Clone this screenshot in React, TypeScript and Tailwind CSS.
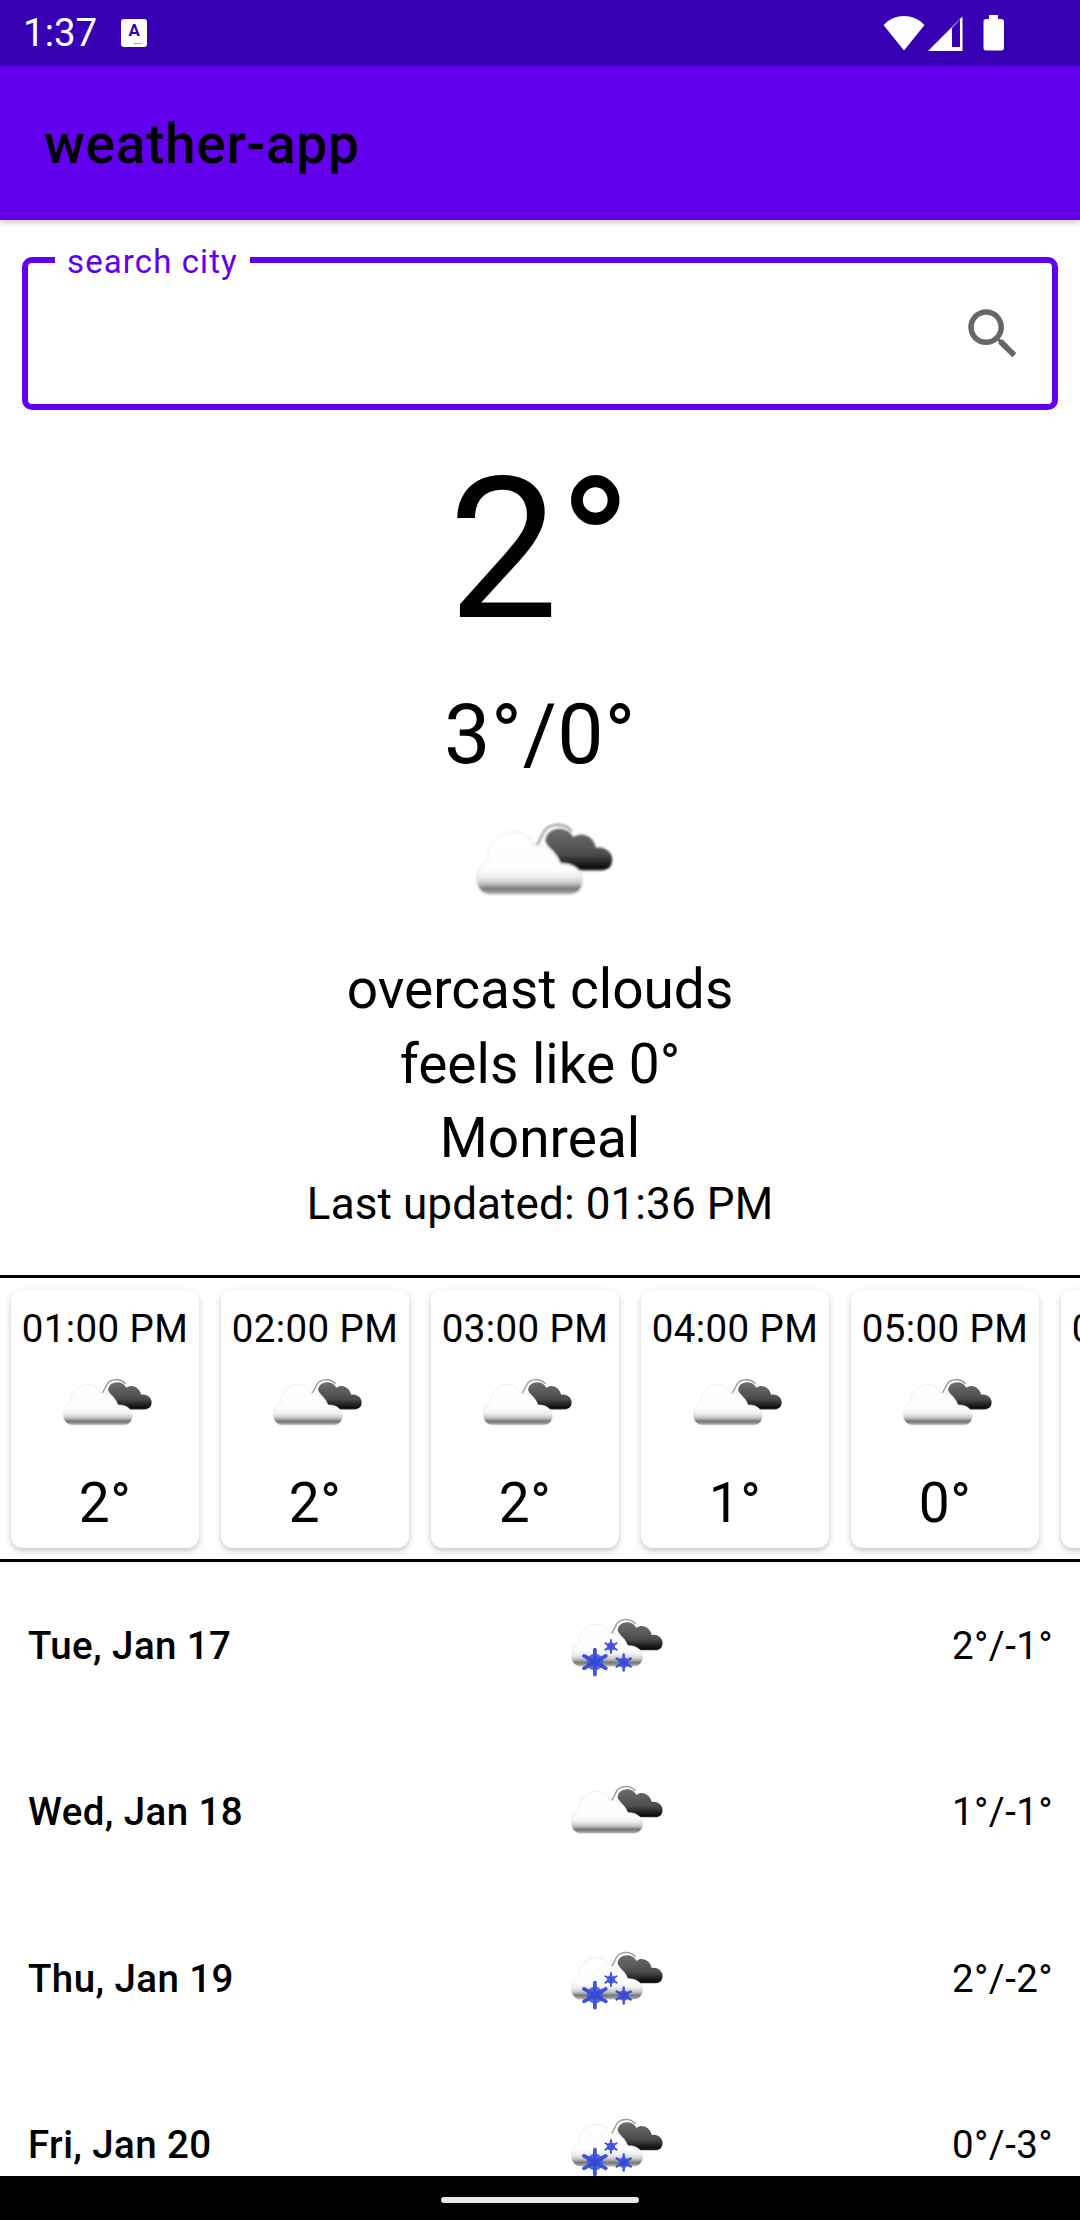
import React from 'react';

const hours = [
    { time: '01:00 PM', temp: '2°' },
    { time: '02:00 PM', temp: '2°' },
    { time: '03:00 PM', temp: '2°' },
    { time: '04:00 PM', temp: '1°' },
    { time: '05:00 PM', temp: '0°' },
    { time: '06:00 PM', temp: '0°' }
];

const days = [
    { date: 'Tue, Jan 17', snow: true, temp: '2°/-1°' },
    { date: 'Wed, Jan 18', snow: false, temp: '1°/-1°' },
    { date: 'Thu, Jan 19', snow: true, temp: '2°/-2°' },
    { date: 'Fri, Jan 20', snow: true, temp: '0°/-3°' }
];

const Flake = ({ x, y, r }: { x: number; y: number; r: number }) => (
    <g transform={`translate(${x} ${y})`} stroke="#3045d8" strokeWidth={r * 0.3} strokeLinecap="round" opacity={0.92}>
        <circle r={r * 0.66} fill="#4a5de2" stroke="none" />
        <line x1={0} y1={-r} x2={0} y2={r} />
        <line x1={-r * 0.87} y1={-r * 0.5} x2={r * 0.87} y2={r * 0.5} />
        <line x1={-r * 0.87} y1={r * 0.5} x2={r * 0.87} y2={-r * 0.5} />
    </g>
);

const WeatherIcon = ({ snow, className }: { snow?: boolean; className: string }) => (
    <svg viewBox="100 90 430 280" className={className}>
        <defs>
            <linearGradient id="whiteCloud" x1="0" y1="0" x2="0" y2="1">
                <stop offset="0" stopColor="#ffffff" />
                <stop offset="0.6" stopColor="#fdfdfd" />
                <stop offset="0.72" stopColor="#eeeeee" />
                <stop offset="0.82" stopColor="#c8c8c8" />
                <stop offset="0.91" stopColor="#777777" />
                <stop offset="1" stopColor="#b0b0b0" />
            </linearGradient>
            <linearGradient id="darkCloud" x1="0" y1="0" x2="0" y2="1">
                <stop offset="0" stopColor="#6e6e6e" />
                <stop offset="0.6" stopColor="#4c4c4c" />
                <stop offset="0.93" stopColor="#0c0c0c" />
                <stop offset="1" stopColor="#333333" />
            </linearGradient>
            <filter id="soft" x="-10%" y="-10%" width="120%" height="120%">
                <feGaussianBlur stdDeviation="3.5" />
            </filter>
        </defs>
        <g filter="url(#soft)">
            <path
                d="M318 160 C318 118 382 108 402 148 C428 128 464 146 470 180 C496 174 526 196 518 224 C514 244 496 250 470 248 L420 248 C392 248 372 238 362 222 C350 190 325 180 318 160 Z"
                fill="url(#darkCloud)"
            />
            <path
                d="M286 178 C298 168 304 146 314 130 C328 108 372 100 398 130"
                fill="none"
                stroke="#a0a0a0"
                strokeWidth="7"
            />
            <path
                d="M150 320 C122 318 106 292 112 262 C116 238 130 222 146 214 C140 168 186 130 226 132 C252 133 272 148 282 172 C318 172 348 190 362 228 C398 224 432 246 430 282 C428 306 412 320 392 320 Z"
                fill="url(#whiteCloud)"
                stroke="#e4e4e4"
                strokeWidth="3"
            />
            {snow && (
                <>
                    <Flake x={216} y={301} r={56} />
                    <Flake x={288} y={231} r={29} />
                    <Flake x={345} y={303} r={36} />
                </>
            )}
        </g>
    </svg>
);

const StatusBar = () => (
    <div className="h-[66px] shrink-0 bg-[#3700B3] flex items-center text-white">
        <span className="ml-[23px] text-[38.5px] leading-none">1:37</span>
        <div className="ml-[24px] w-[26px] h-[28px] bg-white rounded-[3px] flex flex-col items-center text-[#3700B3]">
            <span className="text-[17px] font-bold leading-[18px] mt-[2px]">A</span>
            <span className="text-[8px] font-bold leading-[6px] tracking-[0px] ml-[6px]">...</span>
        </div>
        <div className="ml-auto mr-[75px] flex items-center">
            <svg width="42" height="35" viewBox="0 0 42 35" className="mr-[3px]">
                <path d="M0.500 9 C12 -3 30 -3 41.500 9 L21 34.500 Z" fill="#fff" />
            </svg>
            <svg width="36" height="35" viewBox="0 0 36 35" className="mr-[19px]">
                <path fillRule="evenodd" d="M0 35 L34.500 0.500 L34.500 35 Z M24 12 L24 31 L32 31 L32 3.500 Z" fill="#fff" />
            </svg>
            <svg width="22" height="36" viewBox="0 0 22 36">
                <path d="M6 0 H15 V4 H19 A3 3 0 0 1 21 6 V33 A2.500 2.500 0 0 1 19 35.500 H3 A2.500 2.500 0 0 1 0.500 33 V6 A3 3 0 0 1 3 4 H6 Z" fill="#fff" />
            </svg>
        </div>
    </div>
);

const SearchBox = () => (
    <div className="relative shrink-0 mx-[22px] mt-[37px] h-[153px] border-[6px] border-[#6200EE] rounded-[10px] flex items-center justify-end pr-[26px]">
        <span className="absolute left-[27px] top-[-19px] bg-white px-[12px] text-[33px] leading-[36px] tracking-[1.100px] text-[#6200EE]">search city</span>
        <svg width="66" height="66" viewBox="0 0 24 24" fill="#666666">
            <path d="M15.5 14h-.79l-.28-.27C15.41 12.59 16 11.11 16 9.5 16 5.91 13.09 3 9.5 3S3 5.91 3 9.5 5.91 16 9.5 16c1.61 0 3.09-.59 4.23-1.57l.27.28v.79l5 4.99L20.490 19l-4.990-5zm-6 0C7.010 14 5 11.990 5 9.500S7.010 5 9.500 5 14 7.010 14 9.500 11.990 14 9.500 14z" />
        </svg>
    </div>
);

const App = () => {
    return (
        <div className="w-[1080px] h-[2220px] flex flex-col bg-white text-black overflow-hidden font-['Roboto',sans-serif]">
            <StatusBar />
            <div className="h-[154px] shrink-0 bg-[#6200EE] flex items-center pl-[44px] shadow-[0_3px_6px_rgba(0,0,0,0.18)] z-10">
                <span className="text-[55px] font-medium leading-none tracking-[0.700px] mt-[3px] text-black">weather-app</span>
            </div>
            <div className="flex-1 flex flex-col min-h-0 overflow-hidden">
                <SearchBox />
                <div className="flex flex-col shrink-0 items-center">
                    <div className="text-[196px] leading-[230px] mt-[25px]">2°</div>
                    <div className="text-[82.500px] leading-[96px] tracking-[0.700px] mt-[22px]">3°/0°</div>
                    <WeatherIcon className="w-[143px] h-[93px] mt-[35px] ml-[8px]" />
                    <div className="text-[55px] leading-[74.500px] text-center mt-[41px]">
                        <div>overcast clouds</div>
                        <div>feels like 0°</div>
                        <div>Monreal</div>
                    </div>
                    <div className="text-[44px] leading-[52px] tracking-[0.100px] mt-[2px]">Last updated: 01:36 PM</div>
                </div>
                <div className="mt-[45px] h-[287px] shrink-0 border-y-[3px] border-black flex gap-[22px] pl-[11px] pt-[11px] overflow-hidden">
                    {hours.map((hour, index) => (
                        <div key={index} className="w-[188px] h-[259px] shrink-0 bg-white rounded-[12px] shadow-[0_3px_6px_rgba(0,0,0,0.22)] flex flex-col items-center">
                            <span className="text-[38.500px] leading-[45px] tracking-[0.400px] mt-[17px] whitespace-nowrap">{hour.time}</span>
                            <WeatherIcon className="w-[93px] h-[61px] mt-[24px] ml-[4px] mb-[-1px]" />
                            <span className="text-[55px] leading-[64px] tracking-[0.410px] mt-[36px]">{hour.temp}</span>
                        </div>
                    ))}
                </div>
                <div className="flex flex-col">
                    {days.map((day, index) => (
                        <div key={index} className="h-[166.500px] shrink-0 flex items-center pl-[28px] pr-[27px]">
                            <span className="text-[38.500px] font-medium leading-none tracking-[0.400px] w-[541px] mt-[2px]">{day.date}</span>
                            <WeatherIcon snow={day.snow} className="w-[96px] h-[62.500px] mt-[3px]" />
                            <span className="text-[38.500px] leading-none tracking-[0.400px] ml-auto mt-[2px]">{day.temp}</span>
                        </div>
                    ))}
                </div>
            </div>
            <div className="h-[44px] shrink-0 bg-black flex items-start justify-center z-10">
                <div className="w-[198px] h-[6px] rounded-full bg-[#e8e8e8] mt-[21px]" />
            </div>
        </div>
    );
};

export default App;
